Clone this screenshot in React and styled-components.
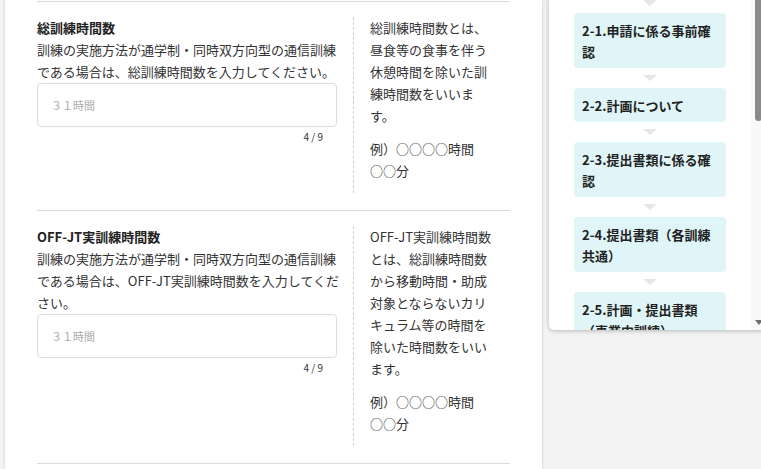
import React from "react";
import styled, { createGlobalStyle } from "styled-components";

const GlobalStyle = createGlobalStyle`
  html, body {
    margin: 0;
    padding: 0;
    overflow: hidden;
    background: #f3f3f3;
  }
  body {
    font-family: "Noto Sans CJK JP", "Noto Sans", sans-serif;
    color: #333;
  }
`;

const Page = styled.div`
  display: flex;
  align-items: flex-start;
  width: 761px;
  height: 469px;
  overflow: hidden;
`;

const Main = styled.main`
  flex: none;
  box-sizing: border-box;
  width: 537px;
  height: 469px;
  margin-left: 5px;
  padding: 1px 32px 0;
  background: #fff;
  box-shadow: 0 0 3px rgba(0, 0, 0, 0.18);
`;

const Field = styled.section`
  display: flex;
  align-items: flex-start;
  padding: 15px 0 17px;
  border-top: 1px solid #dadada;
  &:last-child {
    border-bottom: 1px solid #dadada;
  }
`;

const InputCol = styled.div`
  flex: none;
  width: 304px;
`;

const Label = styled.div`
  font-size: 13px;
  font-weight: 700;
  line-height: 22px;
  color: #222;
`;

const Help = styled.p`
  margin: 0;
  font-size: 13px;
  line-height: 22px;
  color: #333;
`;

const TextBox = styled.input`
  display: block;
  box-sizing: border-box;
  width: 300px;
  height: 44px;
  margin: 0;
  padding: 0 13px;
  border: 1px solid #dcdcdc;
  border-radius: 4px;
  background: #fff;
  font-family: inherit;
  font-size: 11px;
  color: #333;
  outline: none;
  &::placeholder {
    color: #aaa;
  }
`;

const Counter = styled.div`
  width: 300px;
  box-sizing: border-box;
  padding-right: 14px;
  text-align: right;
  font-size: 10px;
  line-height: 20px;
  color: #333;
`;

const Note = styled.aside`
  flex: none;
  width: 124px;
  margin-left: 12px;
  padding: 0 16px 11px 16px;
  border-left: 1px dashed #cfcfcf;
  font-size: 13px;
  line-height: 22px;
  color: #333;
`;

const NotePara = styled.p`
  margin: 0;
  & + & {
    margin-top: 11px;
  }
`;

const Side = styled.div`
  flex: none;
  margin-left: 7px;
  margin-top: -7px;
`;

const Card = styled.nav`
  display: flex;
  width: 217px;
  height: 337px;
  background: #fff;
  border-radius: 5px;
  box-shadow: 0 1px 4px rgba(0, 0, 0, 0.25);
  overflow: hidden;
`;

const Steps = styled.ol`
  flex: none;
  display: flex;
  flex-direction: column;
  width: 152px;
  margin: 0;
  padding: 0 25px;
  list-style: none;
`;

const Step = styled.li`
  display: flex;
  flex-direction: column;
  flex: none;
`;

const Arrow = styled.span`
  align-self: center;
  width: 0;
  height: 0;
  margin: 7px 0;
  border-left: 7px solid transparent;
  border-right: 7px solid transparent;
  border-top: 6px solid #e6e6e6;
`;

const StepBox = styled.div`
  padding: 7px 8px 6px;
  border-radius: 4px;
  background: #dff5f7;
  font-size: 13px;
  font-weight: 700;
  line-height: 21px;
  color: #222;
`;

const Track = styled.div`
  flex: none;
  display: flex;
  flex-direction: column;
  align-items: center;
  width: 15px;
  background: #f9f9f9;
`;

const Thumb = styled.div`
  width: 7px;
  height: 128px;
  border-radius: 4px;
  background: #8a8a8a;
`;

const ScrollArrow = styled.span`
  width: 0;
  height: 0;
  margin-top: auto;
  margin-bottom: 5px;
  border-left: 4px solid transparent;
  border-right: 4px solid transparent;
  border-top: 5px solid #707070;
`;

const fields = [
  {
    label: "総訓練時間数",
    help: "訓練の実施方法が通学制・同時双方向型の通信訓練である場合は、総訓練時間数を入力してください。",
    note: "総訓練時間数とは、昼食等の食事を伴う休憩時間を除いた訓練時間数をいいます。",
  },
  {
    label: "OFF-JT実訓練時間数",
    help: "訓練の実施方法が通学制・同時双方向型の通信訓練である場合は、OFF-JT実訓練時間数を入力してください。",
    note: "OFF-JT実訓練時間数とは、総訓練時間数から移動時間・助成対象とならないカリキュラム等の時間を除いた時間数をいいます。",
  },
];

const steps = [
  "2-1.申請に係る事前確認",
  "2-2.計画について",
  "2-3.提出書類に係る確認",
  "2-4.提出書類（各訓練共通）",
  "2-5.計画・提出書類（事業内訓練）",
];

export default function App() {
  return (
    <>
      <GlobalStyle />
      <Page>
        <Main>
          {fields.map((f) => (
            <Field key={f.label}>
              <InputCol>
                <Label>{f.label}</Label>
                <Help>{f.help}</Help>
                <TextBox placeholder="３１時間" />
                <Counter>4 / 9</Counter>
              </InputCol>
              <Note>
                <NotePara>{f.note}</NotePara>
                <NotePara>
                  例）○○○○時間
                  <br />
                  ○○分
                </NotePara>
              </Note>
            </Field>
          ))}
        </Main>
        <Side>
          <Card>
            <Steps>
              {steps.map((s) => (
                <Step key={s}>
                  <Arrow />
                  <StepBox>{s}</StepBox>
                </Step>
              ))}
            </Steps>
            <Track>
              <Thumb />
              <ScrollArrow />
            </Track>
          </Card>
        </Side>
      </Page>
    </>
  );
}
